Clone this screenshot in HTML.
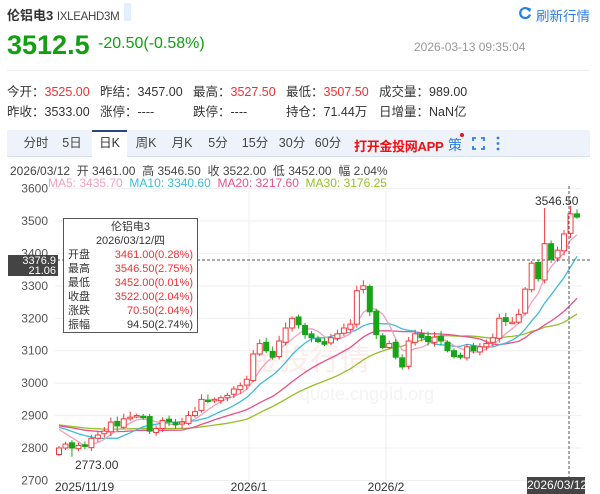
<!DOCTYPE html>
<html><head><meta charset="utf-8">
<style>
*{margin:0;padding:0;box-sizing:border-box}
body{width:600px;height:494px;overflow:hidden;background:#fff;font-family:"Liberation Sans","Noto Sans CJK SC",sans-serif;color:#333;position:relative}
.a{position:absolute;white-space:nowrap}
.r{color:#f03030}
.tab{position:absolute;top:130px;height:26px;line-height:26px;font-size:12.5px;color:#444;text-align:center}
</style></head><body>
<div class="a" style="left:7px;top:5px;font-size:13px;color:#333"><b style="font-weight:bold">伦铝电3</b> <span style="font-size:11.5px;color:#444;letter-spacing:-0.3px">IXLEAHD3M</span></div>
<div class="a" style="left:124px;top:3px;width:7px;height:18px;background:#e2efff"></div>
<svg class="a" style="left:518px;top:6px" width="14" height="14" viewBox="0 0 14 14"><path d="M11.5 4.5A5 5 0 1 0 12 8.5" fill="none" stroke="#2e7ee0" stroke-width="2.2"/><path d="M9 1.5L13 2.5 12 6.5Z" fill="#2e7ee0"/></svg>
<div class="a" style="left:536px;top:5px;font-size:13.5px;color:#2e7ee0">刷新行情</div>
<div class="a" style="left:7px;top:30px;font-size:27px;font-weight:bold;color:#12a012">3512.5</div>
<div class="a" style="left:98px;top:35px;font-size:16px;color:#12a012">-20.50(-0.58%)</div>
<div class="a" style="left:414px;top:40px;font-size:12px;color:#999">2026-03-13 09:35:04</div>
<div class="a" style="left:7px;top:70px;width:583px;height:1px;background:#eee"></div>
<div class="a" style="left:7px;top:82px;font-size:12.5px;line-height:20px">今开：<span class="r">3525.00</span><br>昨收：3533.00</div>
<div class="a" style="left:100px;top:82px;font-size:12.5px;line-height:20px">昨结：3457.00<br>涨停：----</div>
<div class="a" style="left:193px;top:82px;font-size:12.5px;line-height:20px">最高：<span class="r">3527.50</span><br>跌停：----</div>
<div class="a" style="left:286px;top:82px;font-size:12.5px;line-height:20px">最低：<span class="r">3507.50</span><br>持仓：71.44万</div>
<div class="a" style="left:379px;top:82px;font-size:12.5px;line-height:20px">成交量：989.00<br>日增量：NaN亿</div>
<div class="a" style="left:7px;top:130px;width:583px;height:27px;background:#eef3fb;border-bottom:1px solid #d6e0ee"></div>
<div class="a" style="left:92px;top:130px;width:35px;height:27px;background:#fff;border-top:2px solid #2a4580"></div>
<div class="tab" style="left:20px;width:32px">分时</div>
<div class="tab" style="left:58px;width:28px">5日</div>
<div class="tab" style="left:92px;width:35px;color:#333">日K</div>
<div class="tab" style="left:130px;width:32px">周K</div>
<div class="tab" style="left:166px;width:32px">月K</div>
<div class="tab" style="left:202px;width:32px">5分</div>
<div class="tab" style="left:239px;width:32px">15分</div>
<div class="tab" style="left:276px;width:32px">30分</div>
<div class="tab" style="left:312px;width:32px">60分</div>
<div class="a" style="left:354px;top:136px;font-size:13px;font-weight:bold;color:#f01010;letter-spacing:-0.3px">打开金投网APP</div>
<div class="a" style="left:448px;top:135px;font-size:14px;color:#2e7ee0">策</div>
<div class="a" style="left:460px;top:133px;width:4px;height:4px;border-radius:2px;background:#f01010"></div>
<svg class="a" style="left:472px;top:137px" width="13" height="13"><path d="M1 4V1h3M9 1h3v3M12 9v3H9M4 12H1V9" fill="none" stroke="#2e7ee0" stroke-width="1.8"/></svg>
<svg class="a" style="left:496px;top:136px" width="4" height="15"><circle cx="2" cy="2" r="1.4" fill="#2e7ee0"/><circle cx="2" cy="7.5" r="1.4" fill="#2e7ee0"/><circle cx="2" cy="13" r="1.4" fill="#2e7ee0"/></svg>
<div class="a" style="left:10px;top:162px;font-size:12px;color:#444">2026/03/12 &nbsp;开 3461.00 &nbsp;高 3546.50 &nbsp;收 3522.00 &nbsp;低 3452.00 &nbsp;幅 2.04%</div>
<div class="a" style="left:48px;top:176px;font-size:12px"><span style="color:#f4a0bc">MA5: 3435.70</span> &nbsp;<span style="color:#3cbcd8">MA10: 3340.60</span> &nbsp;<span style="color:#e8508a">MA20: 3217.60</span> &nbsp;<span style="color:#98be28">MA30: 3176.25</span></div>
<svg id="ch" class="a" style="left:0;top:0" width="600" height="494"></svg>
<div class="a" style="left:8px;top:255px;width:50px;height:21px;background:#444;color:#fff;font-size:11px;line-height:10px;text-align:right;padding:1px 2px 0 0;overflow:hidden">3376.9<br>21.06</div>
<div class="a" style="left:63px;top:218px;width:135px;height:115px;background:#fff;border:1px solid #555;font-size:11px;line-height:14px;padding:1px 4px 0">
<div style="text-align:center">伦铝电3</div><div style="text-align:center">2026/03/12/四</div>
<div>开盘<span class="r" style="float:right">3461.00(0.28%)</span></div>
<div>最高<span class="r" style="float:right">3546.50(2.75%)</span></div>
<div>最低<span class="r" style="float:right">3452.00(0.01%)</span></div>
<div>收盘<span class="r" style="float:right">3522.00(2.04%)</span></div>
<div>涨跌<span class="r" style="float:right">70.50(2.04%)</span></div>
<div>振幅<span style="float:right">94.50(2.74%)</span></div>
</div>
<div class="a" style="left:527px;top:477px;width:58px;height:17px;background:#444;color:#fff;font-size:12px;line-height:17px;text-align:center">2026/03/12</div>
<script>
var Y=function(p){return 221+(3500-p)*0.3243;};
var s='';
[3600,3500,3400,3300,3200,3100,3000,2900,2800,2700].forEach(function(p){var y=Y(p);s+='<line x1="55" x2="582" y1="'+y+'" y2="'+y+'" stroke="#efefef"/><text x="48" y="'+(y+4)+'" font-size="12" fill="#555" text-anchor="end" font-family="Liberation Sans">'+p+'</text>';});
[249,386].forEach(function(x){s+='<line x1="'+x+'" x2="'+x+'" y1="190" y2="480" stroke="#efefef"/>';});
s+='<text x="250" y="370" font-size="30" fill="#fcecea" font-family="Noto Sans CJK SC">金投行情</text><text x="300" y="400" font-size="18" fill="#f3f3f3" font-family="Liberation Sans">quote.cngold.org</text>';
var C=[2800,2812,2800,2808,2805,2830,2840,2852,2880,2868,2890,2895,2900,2895,2852,2860,2885,2880,2872,2880,2900,2912,2950,2946,2950,2955,2962,2982,2992,3012,3090,3122,3100,3080,3130,3170,3200,3180,3150,3140,3128,3120,3140,3152,3170,3182,3285,3300,3220,3150,3110,3122,3080,3050,3130,3152,3140,3128,3142,3130,3100,3082,3080,3112,3100,3112,3122,3140,3200,3190,3188,3212,3290,3370,3322,3430,3382,3410,3460,3522,3512];
var pre=[];for(var i=0;i<30;i++)pre.push(2870-i*0.3+(i%3)*8);
var all=pre.concat(C);var n=C.length,x0=59,dx=(577-59)/(n-1);
function ma(k){var pts=[];for(var i=0;i<n;i++){var j=i+30,sm=0;for(var t=0;t<k;t++)sm+=all[j-t];pts.push((x0+i*dx).toFixed(1)+','+Y(sm/k).toFixed(1));}return pts.join(' ');}
[[30,'#98be28'],[20,'#e8508a'],[10,'#3cbcd8'],[5,'#f4a0bc']].forEach(function(m){s+='<polyline points="'+ma(m[0])+'" fill="none" stroke="'+m[1]+'" stroke-width="1.3"/>';});
var prev=2812;
for(var i=0;i<n;i++){var c=C[i],o=(i==0?2780:prev+((i*7)%5-2)*2);if(i==n-1)o=3522;var x=x0+i*dx;var h=Math.max(o,c)+6+(i*13)%12,l=Math.min(o,c)-5-(i*11)%10;
if(i==2)l=2773;if(i==79)h=3546.5;if(i==75)h=3540;
var up=c>=o,col=up?'#f03a3a':'#18a418';var yt=Y(Math.max(o,c)),yb=Y(Math.min(o,c));if(yb-yt<1.5)yb=yt+1.5;
s+='<line x1="'+x+'" x2="'+x+'" y1="'+Y(h)+'" y2="'+yt+'" stroke="'+col+'"/><line x1="'+x+'" x2="'+x+'" y1="'+yb+'" y2="'+Y(l)+'" stroke="'+col+'"/>';
s+='<rect x="'+(x-2.5)+'" y="'+yt+'" width="5" height="'+(yb-yt)+'" fill="'+(up?'#fff':col)+'" stroke="'+col+'"/>';prev=c;}
s+='<line x1="57" x2="592" y1="260" y2="260" stroke="#555" stroke-dasharray="3,2"/><line x1="569" x2="569" y1="186" y2="494" stroke="#555" stroke-dasharray="3,2"/>';
s+='<text x="535" y="205" font-size="12" fill="#333" font-family="Liberation Sans">3546.50</text><text x="75" y="469" font-size="12" fill="#333" font-family="Liberation Sans">2773.00</text>';
s+='<text x="55" y="491" font-size="12" fill="#333" font-family="Liberation Sans">2025/11/19</text><text x="249" y="491" font-size="12" fill="#333" text-anchor="middle" font-family="Liberation Sans">2026/1</text><text x="386" y="491" font-size="12" fill="#333" text-anchor="middle" font-family="Liberation Sans">2026/2</text>';
document.getElementById('ch').innerHTML=s;
</script>
</body></html>
